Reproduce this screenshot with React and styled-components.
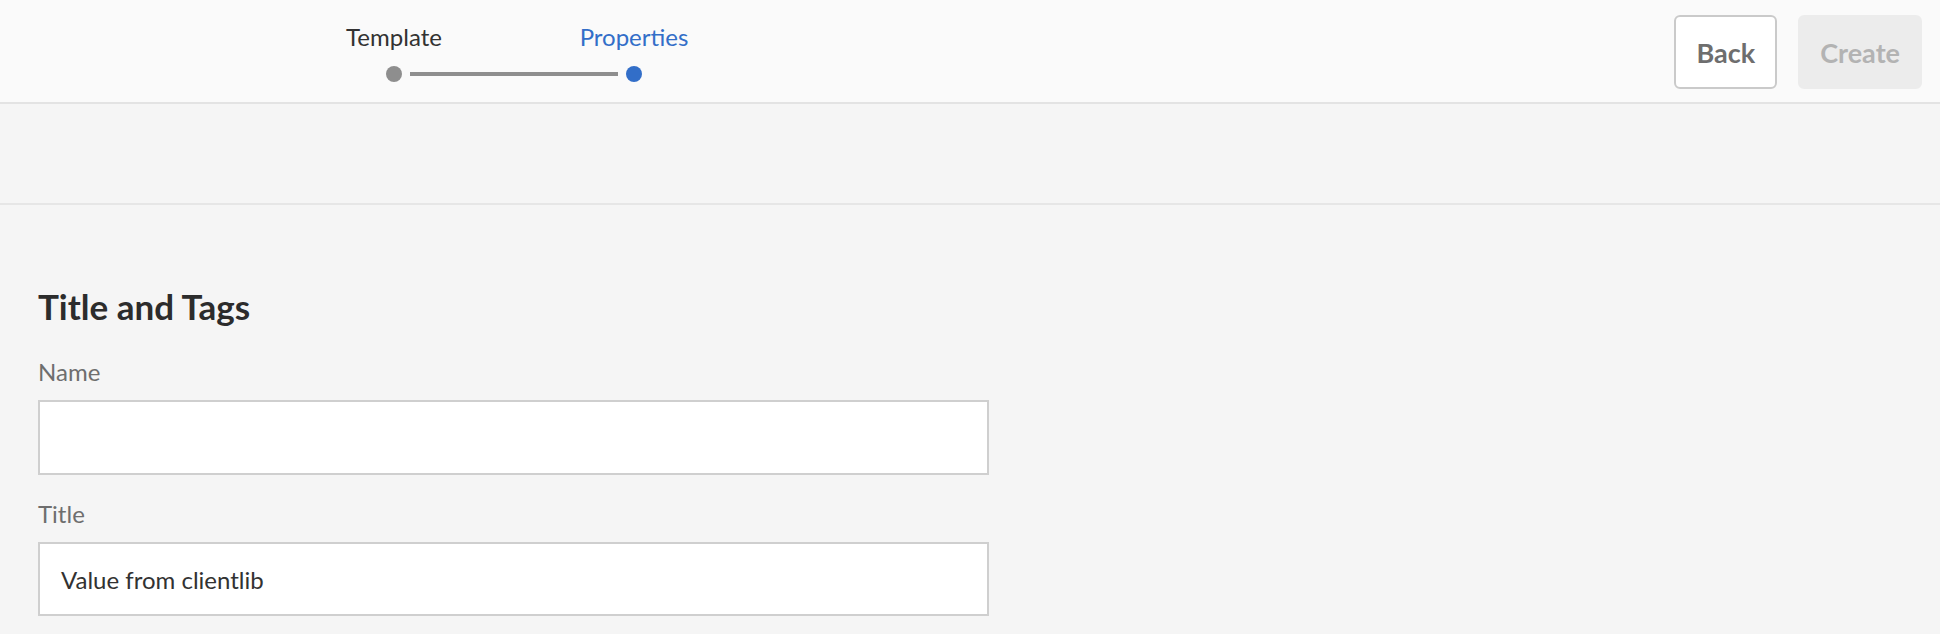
import React from "react";
import styled, { createGlobalStyle } from "styled-components";

const Global = createGlobalStyle`
  html, body { margin: 0; padding: 0; background: #f5f5f5; }
  body { font-family: Lato, "Open Sans", "Liberation Sans", sans-serif; }
  * { box-sizing: border-box; }
`;

const Page = styled.div`
  width: 1940px;
  height: 634px;
  overflow: hidden;
  background: #f5f5f5;
`;

const Header = styled.header`
  height: 104px;
  background: #fafafa;
  border-bottom: 2px solid #e3e3e3;
  display: flex;
  align-items: flex-start;
  justify-content: space-between;
  padding: 0 18px 0 274px;
`;

const Stepper = styled.div`
  display: grid;
  grid-template-columns: 240px 240px;
  grid-template-rows: auto auto;
  padding-top: 19px;
`;

const StepLabel = styled.div`
  text-align: center;
  font-size: 24px;
  line-height: 36px;
  color: ${(p) => (p.$active ? "#326ec8" : "#323232")};
`;

const Track = styled.div`
  grid-column: 1 / 3;
  display: flex;
  align-items: center;
  padding: 0 112px;
  margin-top: 11px;
`;

const Dot = styled.span`
  width: 16px;
  height: 16px;
  border-radius: 50%;
  background: ${(p) => (p.$active ? "#326ec8" : "#8e8e8e")};
  flex: none;
`;

const Line = styled.span`
  flex: 1;
  height: 4px;
  margin: 0 8px;
  background: #8e8e8e;
`;

const Actions = styled.div`
  display: flex;
  gap: 21px;
  padding-top: 15px;
`;

const Button = styled.button`
  height: 74px;
  padding: 0 ${(p) => p.$pad || 20}px;
  border-radius: 6px;
  font-family: Lato, "Open Sans", "Liberation Sans", sans-serif;
  font-weight: 700;
  font-size: 27px;
  border: 2px solid ${(p) => (p.$disabled ? "#ececec" : "#cacaca")};
  background: ${(p) => (p.$disabled ? "#ececec" : "#ffffff")};
  color: ${(p) => (p.$disabled ? "#b3b3b3" : "#6e6e6e")};
`;

const Band = styled.div`
  height: 101px;
  background: #f5f5f5;
  border-bottom: 2px solid #e6e6e6;
`;

const Content = styled.main`
  padding: 0 38px;
`;

const Heading = styled.h2`
  margin: 0;
  padding-top: 80px;
  font-size: 35px;
  line-height: 42px;
  font-weight: 700;
  color: #2c2c2c;
`;

const Field = styled.div`
  display: flex;
  flex-direction: column;
  width: 951px;
`;

const Label = styled.label`
  font-size: 24px;
  line-height: 30px;
  color: #6e6e6e;
  margin: ${(p) => p.$top || 0}px 0 13px;
`;

const Input = styled.div`
  height: ${(p) => p.$h || 75}px;
  background: #ffffff;
  border: 2px solid #cfcfcf;
  display: flex;
  align-items: center;
  padding: 0 21px;
  font-size: 24px;
  color: #323232;
`;

export default function App() {
  return (
    <Page>
      <Global />
      <Header>
        <Stepper>
          <StepLabel>Template</StepLabel>
          <StepLabel $active>Properties</StepLabel>
          <Track>
            <Dot />
            <Line />
            <Dot $active />
          </Track>
        </Stepper>
        <Actions>
          <Button $pad={20}>Back</Button>
          <Button $disabled $pad={20}>Create</Button>
        </Actions>
      </Header>
      <Band />
      <Content>
        <Heading>Title and Tags</Heading>
        <Field>
          <Label $top={30}>Name</Label>
          <Input />
          <Label $top={24}>Title</Label>
          <Input $h={74}>Value from clientlib</Input>
        </Field>
      </Content>
    </Page>
  );
}
